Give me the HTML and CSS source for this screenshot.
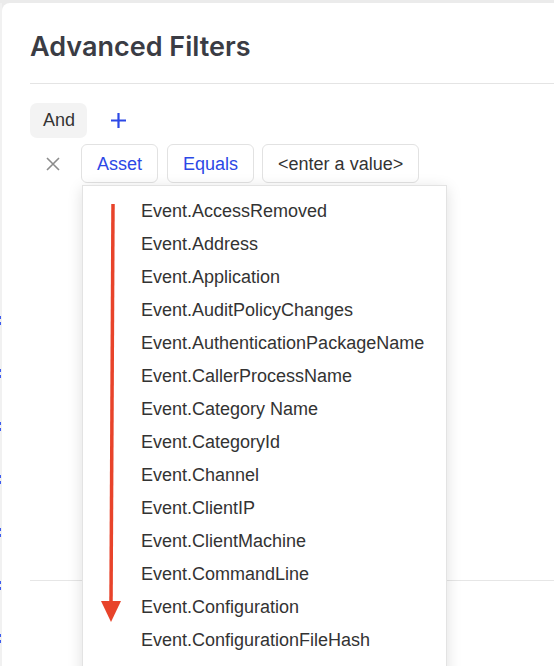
FILE: index.html
```html
<!DOCTYPE html>
<html lang="en">
<head>
  <meta charset="UTF-8">
  <meta name="viewport" content="width=device-width, initial-scale=1.0">
  <title>Advanced Filters</title>
  <link rel="stylesheet" href="styles.css">
</head>
<body>

  <div class="screen">
    <div class="edge"></div>
    <div class="panel">
      <div class="head">
        <h1>Advanced Filters</h1>
      </div>

      <div class="body">
        <div class="ops">
          <span class="pill">And</span>
          <span class="add">
            <svg width="17" height="17" viewBox="0 0 17 17"><path d="M8.5 1v15M1 8.5h15" stroke="#2c48e6" stroke-width="2.2" fill="none"/></svg>
          </span>
        </div>

        <div class="rule">
          <span class="remove">
            <svg width="14" height="14" viewBox="0 0 14 14"><path d="M1 1l12 12M13 1L1 13" stroke="#8c8c8c" stroke-width="1.6" fill="none"/></svg>
          </span>
          <div class="field">
            <span class="chip blue">Asset</span>
            <ul class="menu">
              <li>Event.AccessRemoved</li>
              <li>Event.Address</li>
              <li>Event.Application</li>
              <li>Event.AuditPolicyChanges</li>
              <li>Event.AuthenticationPackageName</li>
              <li>Event.CallerProcessName</li>
              <li>Event.Category Name</li>
              <li>Event.CategoryId</li>
              <li>Event.Channel</li>
              <li>Event.ClientIP</li>
              <li>Event.ClientMachine</li>
              <li>Event.CommandLine</li>
              <li>Event.Configuration</li>
              <li>Event.ConfigurationFileHash</li>
            </ul>
          </div>
          <span class="chip blue">Equals</span>
          <span class="chip">&lt;enter a value&gt;</span>
        </div>
      </div>

      <div class="foot"></div>
    </div>

    <!-- annotation arrow drawn over the list -->
    <svg class="arrow" width="554" height="666" viewBox="0 0 554 666">
      <path d="M113 204L111 604" stroke="#e8432a" stroke-width="3.5" fill="none"/>
      <polygon points="101,601 121,601 111,622" fill="#e8432a"/>
    </svg>
  </div>

</body>
</html>
```

FILE: styles.css
```css
*{
  margin: 0;
  padding: 0;
  box-sizing: border-box;
}
body{
  background: #ebebeb;
  font-family: 'Liberation Sans', Arial, sans-serif;
  overflow: hidden;
}
.screen{
  position: relative;
  display: flex;
  height: 666px;
  padding-top: 3px;
}
.edge{
  width: 2px;
  background-color: #f1f1f1;
  background-image: repeating-linear-gradient(to bottom, #3d5cf0 0, #3d5cf0 3px, transparent 3px, transparent 6px, #3d5cf0 6px, #3d5cf0 9px, transparent 9px, transparent 53px);
  background-size: 1px 360px;
  background-position: 0 313px;
  background-repeat: no-repeat;
}
.panel{
  flex: 1;
  background: #fff;
  border-top-left-radius: 8px;
  position: relative;
}
.head{
  margin-left: 28px;
  padding: 27px 0 19px;
  border-bottom: 1px solid #e4e4e4;
}
.head h1{
  font-family: 'Inter', sans-serif;
  font-size: 27px;
  line-height: 34px;
  font-weight: 600;
  color: #3a3c44;
}
.body{
  height: 496px;
  padding-left: 28px;
}
.ops{
  display: flex;
  align-items: center;
  padding-top: 19px;
}
.pill{
  display: block;
  background: #f3f3f3;
  border-radius: 7px;
  height: 35px;
  line-height: 35px;
  padding: 0 12px 0 13px;
  font-size: 18px;
  color: #333;
}
.add{
  display: flex;
  margin-left: 23px;
}
.rule{
  display: flex;
  align-items: center;
  margin-top: 6px;
  padding-left: 16px;
}
.remove{
  display: flex;
  margin-right: 21px;
}
.field{
  position: relative;
  margin-right: 9px;
}
.chip{
  display: block;
  height: 39px;
  line-height: 39px;
  border: 1px solid #e2e2e2;
  border-radius: 6px;
  padding: 0 15px;
  font-size: 18px;
  color: #333;
  background: #fff;
}
.chip.blue{
  color: #2c48e6;
  margin-right: 8px;
}
.field .chip{
  margin-right: 0;
}
.menu{
  list-style: none;
  position: absolute;
  top: 41px;
  left: 1px;
  width: 365px;
  background: #fff;
  border: 1px solid #e3e3e3;
  box-shadow: 0 3px 14px rgba(0, 0, 0, 0.13);
  padding: 9px 0 0 58px;
  height: 500px;
  z-index: 2;
}
.menu li{
  font-size: 18px;
  line-height: 33px;
  color: #333;
  white-space: nowrap;
}
.foot{
  margin-left: 28px;
  border-top: 1px solid #e6e6e6;
  height: 90px;
}
.arrow{
  position: absolute;
  left: 0;
  top: 0;
  pointer-events: none;
  z-index: 3;
}
```
